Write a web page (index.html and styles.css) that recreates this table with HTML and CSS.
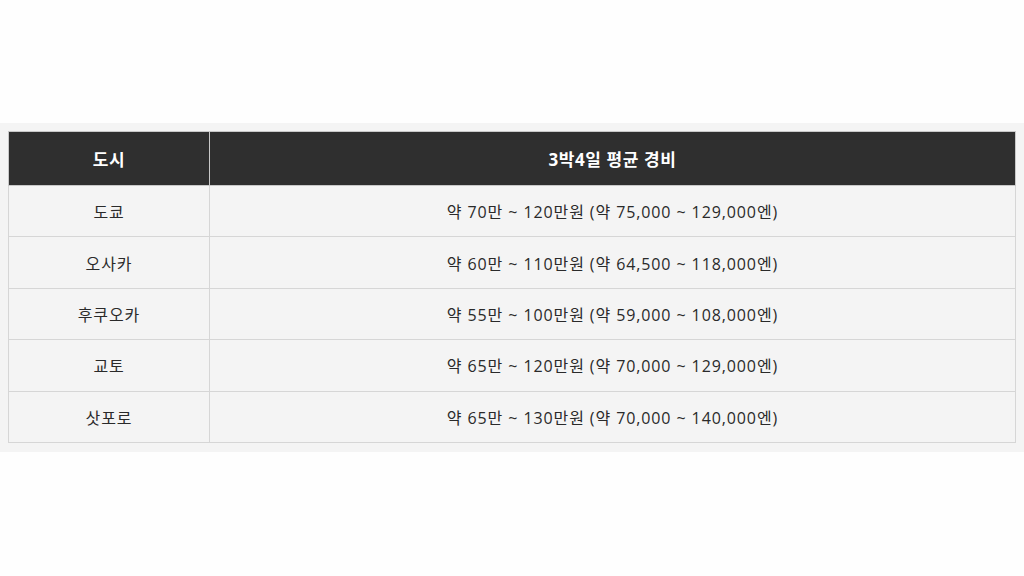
FILE: index.html
```html
<!DOCTYPE html>
<html lang="ko">
<head>
<meta charset="utf-8">
<link rel="stylesheet" href="styles.css">
</head>
<body>
<div class="wrap">
  <table class="cost">
    <thead>
      <tr><th class="city">도시</th><th>3박4일 평균 경비</th></tr>
    </thead>
    <tbody>
      <tr><td>도쿄</td><td>약 70만 ~ 120만원 (약 75,000 ~ 129,000엔)</td></tr>
      <tr><td>오사카</td><td>약 60만 ~ 110만원 (약 64,500 ~ 118,000엔)</td></tr>
      <tr><td>후쿠오카</td><td>약 55만 ~ 100만원 (약 59,000 ~ 108,000엔)</td></tr>
      <tr><td>교토</td><td>약 65만 ~ 120만원 (약 70,000 ~ 129,000엔)</td></tr>
      <tr><td>삿포로</td><td>약 65만 ~ 130만원 (약 70,000 ~ 140,000엔)</td></tr>
    </tbody>
  </table>
</div>
</body>
</html>
```
FILE: styles.css
```css
html, body {
  margin: 0;
  padding: 0;
  background: #fefefe;
}
body {
  font-family: "Open Sans", "Noto Sans CJK KR", sans-serif;
  color: #2a2a2a;
}
.wrap {
  margin-top: 123px;
  padding: 8px 8px 9px;
  background: #f4f4f4;
}
.cost {
  width: 100%;
  border-collapse: collapse;
  table-layout: fixed;
  font-size: 16px;
}
.cost th, .cost td {
  border: 1px solid #d6d6d6;
  text-align: center;
  padding: 0;
}
.cost th {
  background: #2f2f2f;
  color: #fff;
  font-weight: bold;
  font-size: 17px;
  letter-spacing: 0.6px;
  height: 53px;
  border-color: #c8c8c8;
}
.cost th.city {
  width: 200px;
}
.cost td {
  background: #f4f4f4;
  height: 50.4px;
  letter-spacing: 0.9px;
}
```
